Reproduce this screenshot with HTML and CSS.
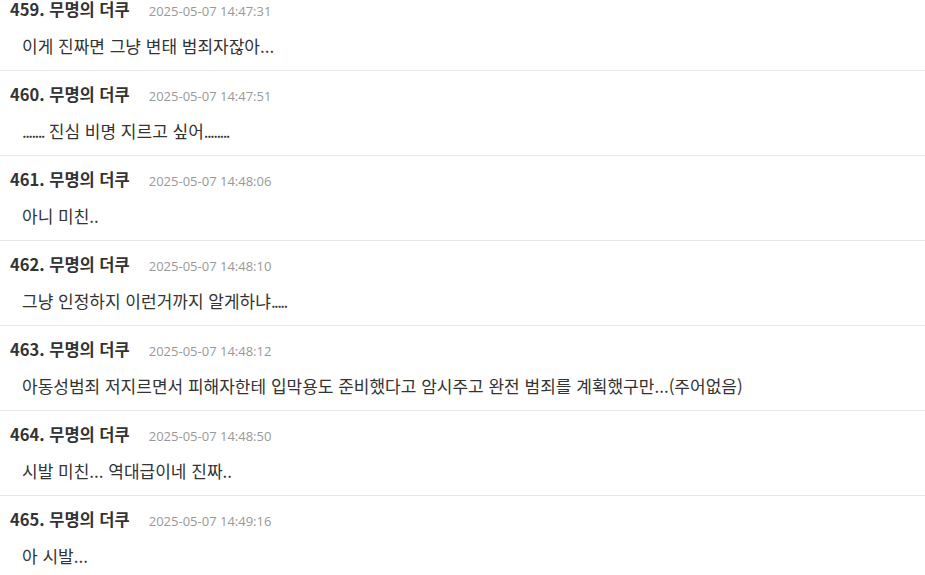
FILE: index.html
```html
<!DOCTYPE html>
<html lang="ko">
<head>
<meta charset="utf-8">
<link rel="stylesheet" href="styles.css">
</head>
<body>
<ul class="comments">
  <li class="comment">
    <div class="meta"><span class="name">459. 무명의 더쿠</span><span class="date">2025-05-07 14:47:31</span></div>
    <div class="body">이게 진짜면 그냥 변태 범죄자잖아...</div>
  </li>
  <li class="comment">
    <div class="meta"><span class="name">460. 무명의 더쿠</span><span class="date">2025-05-07 14:47:51</span></div>
    <div class="body"><span class="dots">.......</span> 진심 비명 지르고 싶어<span class="dots">........</span></div>
  </li>
  <li class="comment">
    <div class="meta"><span class="name">461. 무명의 더쿠</span><span class="date">2025-05-07 14:48:06</span></div>
    <div class="body">아니 미친..</div>
  </li>
  <li class="comment">
    <div class="meta"><span class="name">462. 무명의 더쿠</span><span class="date">2025-05-07 14:48:10</span></div>
    <div class="body">그냥 인정하지 이런거까지 알게하냐<span class="dots">.....</span></div>
  </li>
  <li class="comment">
    <div class="meta"><span class="name">463. 무명의 더쿠</span><span class="date">2025-05-07 14:48:12</span></div>
    <div class="body">아동성범죄 저지르면서 피해자한테 입막용도 준비했다고 암시주고 완전 범죄를 계획했구만...(주어없음)</div>
  </li>
  <li class="comment">
    <div class="meta"><span class="name">464. 무명의 더쿠</span><span class="date">2025-05-07 14:48:50</span></div>
    <div class="body">시발 미친... 역대급이네 진짜..</div>
  </li>
  <li class="comment">
    <div class="meta"><span class="name">465. 무명의 더쿠</span><span class="date">2025-05-07 14:49:16</span></div>
    <div class="body">아 시발...</div>
  </li>
</ul>
</body>
</html>
```
FILE: styles.css
```css
html, body {
  margin: 0;
  padding: 0;
  background: #fff;
}
body {
  font-family: "Noto Sans CJK KR", "Open Sans", sans-serif;
  color: #333;
  overflow: hidden;
}
.comments {
  list-style: none;
  margin: -14px 0 0;
  padding: 0;
}
.comment {
  padding: 13px 10px 13px;
  border-bottom: 1px solid #e8e8e8;
}
.meta {
  display: flex;
  align-items: baseline;
  height: 21px;
  line-height: 21px;
  gap: 19px;
}
.name {
  font-size: 16.5px;
  font-weight: 700;
  color: #333;
}
.date {
  font-family: "Open Sans", sans-serif;
  font-size: 13px;
  color: #999;
}
.body {
  margin-top: 15px;
  padding-left: 12px;
  font-size: 17px;
  line-height: 22px;
  color: #333;
}
.dots {
  letter-spacing: -1.6px;
}
```
